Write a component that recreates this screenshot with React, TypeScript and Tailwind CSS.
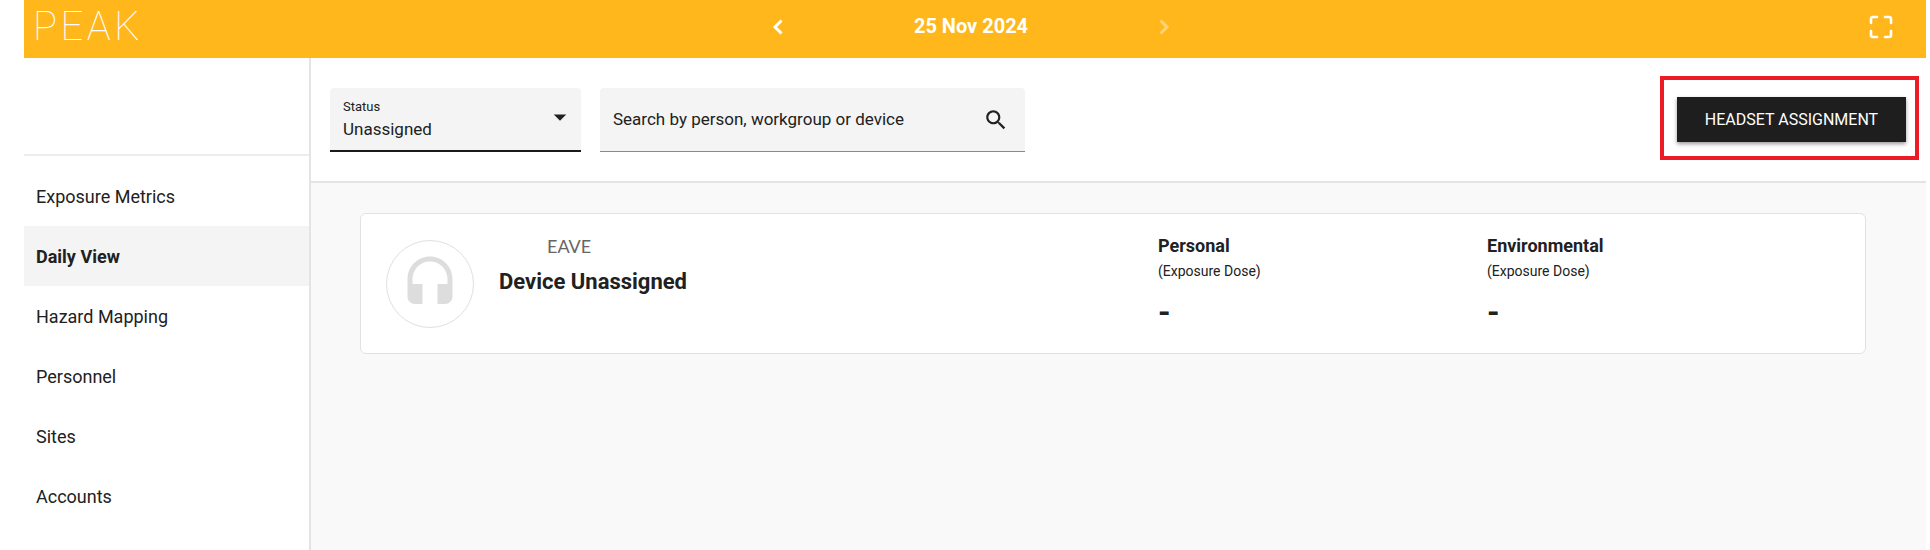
const navItems = ["Exposure Metrics", "Daily View", "Hazard Mapping", "Personnel", "Sites", "Accounts"]

function Chevron({ flip, className }: { flip?: boolean; className?: string }) {
  return (
    <svg width="14" height="16" viewBox="0 0 14 16" fill="none" className={className}>
      <path
        d={flip ? "M3.5 1.5 L10 8 L3.5 14.5" : "M10.5 1.5 L4 8 L10.5 14.5"}
        stroke="white"
        strokeWidth="3"
      />
    </svg>
  )
}

function FullscreenIcon() {
  return (
    <svg width="24" height="24" viewBox="0 0 24 24" fill="none" stroke="white" strokeWidth="2.6" strokeLinecap="round">
      <path d="M2 8 V4 Q2 2 4 2 H8" />
      <path d="M16 2 H20 Q22 2 22 4 V8" />
      <path d="M22 16 V20 Q22 22 20 22 H16" />
      <path d="M8 22 H4 Q2 22 2 20 V16" />
    </svg>
  )
}

function Metric({ title, className }: { title: string; className: string }) {
  return (
    <div className={className}>
      <div className="text-[18px] leading-[24px] font-bold text-[#212121]">{title}</div>
      <div className="text-[14px] leading-[20px] text-[#212121] mt-[3px]">(Exposure Dose)</div>
      <div className="text-[32px] leading-[40px] font-bold text-[#212121] mt-[11px]">-</div>
    </div>
  )
}

export default function App() {
  return (
    <div className="h-[550px] w-[1930px] overflow-hidden bg-white pl-[24px] pr-[4px] font-['Roboto',sans-serif] flex flex-col">
      {/* Top bar */}
      <header className="h-[58px] shrink-0 bg-[#ffb71c] flex items-start relative">
        <div className="ml-[9px] mt-[4px] text-[40px] leading-[46px] font-thin tracking-[3.5px] text-white">PEAK</div>
        <div className="absolute left-[747px] top-[18px] flex items-center">
          <Chevron />
          <div className="w-[372px] text-center text-[20px] leading-[17px] font-bold text-white">25 Nov 2024</div>
          <Chevron flip className="opacity-40" />
        </div>
        <div className="ml-auto mr-[33px] mt-[15px]">
          <FullscreenIcon />
        </div>
      </header>

      <div className="flex flex-1 min-h-0">
        {/* Sidebar */}
        <aside className="w-[287px] shrink-0 border-r-2 border-[#e4e4e4]">
          <div className="h-[98px] border-b-2 border-[#ececec]" />
          <nav className="pt-[10px]">
            {navItems.map((item) => (
              <div
                key={item}
                className={
                  item === "Daily View"
                    ? "h-[60px] flex items-center pl-[12px] text-[18px] font-bold text-[#212121] bg-[#f4f4f4]"
                    : "h-[60px] flex items-center pl-[12px] text-[18px] text-[#212121]"
                }
              >
                {item}
              </div>
            ))}
          </nav>
        </aside>

        <main className="flex-1 min-w-0 flex flex-col bg-[#f9f9f9]">
          {/* Filters */}
          <div className="h-[125px] shrink-0 bg-white border-b-2 border-[#e4e4e4] flex items-start pl-[19px] relative">
            <div className="mt-[30px] h-[64px] w-[251px] bg-[#f4f4f4] rounded-t-[4px] border-b-2 border-[#1a1a1a] pl-[13px] pr-[6px] flex items-center justify-between">
              <div className="pt-[1px]">
                <div className="text-[13px] leading-[16px] text-[#212121]">Status</div>
                <div className="text-[17px] leading-[24px] text-[#212121] mt-[2px]">Unassigned</div>
              </div>
              <svg width="30" height="30" viewBox="0 0 24 24" fill="#212121" className="mb-[4px]">
                <path d="M7 10l5 5 5-5z" />
              </svg>
            </div>
            <div className="ml-[19px] mt-[30px] h-[64px] w-[425px] bg-[#f4f4f4] rounded-t-[4px] border-b border-[#8a8a8a] pl-[13px] pr-[16px] flex items-center justify-between">
              <span className="text-[17px] text-[#212121] whitespace-nowrap">Search by person, workgroup or device</span>
              <svg width="26" height="26" viewBox="0 0 24 24" fill="#212121">
                <path d="M15.5 14h-.79l-.28-.27C15.41 12.59 16 11.11 16 9.5 16 5.91 13.09 3 9.5 3S3 5.91 3 9.5 5.91 16 9.5 16c1.61 0 3.09-.59 4.23-1.57l.27.28v.79l5 4.99L20.49 19l-4.99-5zm-6 0C7.01 14 5 11.99 5 9.5S7.01 5 9.5 5 14 7.01 14 9.5 11.99 14 9.5 14z" />
              </svg>
            </div>
            {/* annotation around the button */}
            <div className="absolute right-[7px] top-[18px] h-[84px] w-[259px] border-[4px] border-[#ed1c24]" />
            <button className="absolute right-[20px] top-[39px] h-[45px] w-[229px] bg-[#1e1e1e] text-white text-[16px] font-normal shadow-[0_2px_4px_rgba(0,0,0,0.4)]">
              HEADSET ASSIGNMENT
            </button>
          </div>

          {/* Device card */}
          <div className="pt-[30px] pl-[49px] pr-[60px]">
            <div className="h-[141px] bg-white border border-[#e2e2e2] rounded-[6px] flex items-start">
              <div className="ml-[25px] mt-[26px] h-[88px] w-[88px] shrink-0 rounded-full border border-[#e0e0e0] flex items-center justify-center">
                <svg width="60" height="60" viewBox="0 0 24 24" fill="#dddddd">
                  <path d="M12 1c-4.97 0-9 4.03-9 9v7c0 1.66 1.34 3 3 3h3v-8H5v-2c0-3.87 3.13-7 7-7s7 3.13 7 7v2h-4v8h3c1.66 0 3-1.34 3-3v-7c0-4.97-4.03-9-9-9z" />
                </svg>
              </div>
              <div className="ml-[25px] mt-[20px] w-[659px] shrink-0">
                <div className="pl-[48px] font-['Lato',sans-serif] text-[18px] leading-[24px] text-[#666666]">EAVE</div>
                <div className="text-[22px] leading-[28px] font-bold text-[#212121] mt-[10px]">Device Unassigned</div>
              </div>
              <Metric title="Personal" className="mt-[20px] w-[329px] shrink-0" />
              <Metric title="Environmental" className="mt-[20px]" />
            </div>
          </div>
        </main>
      </div>
    </div>
  )
}
